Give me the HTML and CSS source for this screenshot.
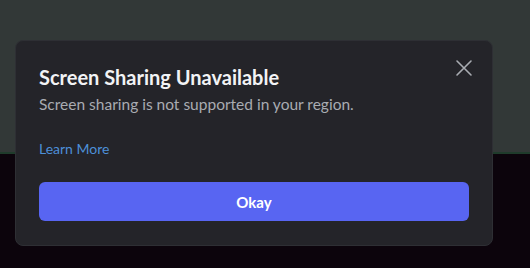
FILE: index.html
```html
<!DOCTYPE html>
<html lang="en">
<head>
    <meta charset="UTF-8">
    <meta name="viewport" content="width=device-width, initial-scale=1.0">
    <title>Screen Sharing Unavailable</title>
    <link rel="stylesheet" href="styles.css">
</head>
<body>
    <div class="backdrop">
        <div class="backdrop-top"></div>
        <div class="backdrop-line"></div>
        <div class="backdrop-bottom"></div>
    </div>
    <div class="modal">
        <button class="close-btn" aria-label="Close">
            <svg width="20" height="20" viewBox="0 0 20 20">
                <path d="M3 3 L17 17 M17 3 L3 17" stroke="#a9acb2" stroke-width="1.6" stroke-linecap="round"/>
            </svg>
        </button>
        <h2 class="modal-title">Screen Sharing Unavailable</h2>
        <p class="modal-text">Screen sharing is not supported in your region.</p>
        <a class="modal-link" href="#">Learn More</a>
        <button class="okay-btn">Okay</button>
    </div>
</body>
</html>
```

FILE: styles.css
```css
body {
    margin: 0;
    padding: 0;
    font-family: Lato, "Noto Sans", sans-serif;
    background-color: #0c040c;
    position: relative;
    height: 268px;
    overflow: hidden;
}
.backdrop {
    display: flex;
    flex-direction: column;
    height: 100%;
}
.backdrop-top {
    height: 152px;
    background-color: #323837;
}
.backdrop-line {
    height: 2px;
    background-color: #1f3b2b;
}
.backdrop-bottom {
    flex: 1;
    background-color: #0c040c;
}
.modal {
    position: absolute; /* sits over the app */
    top: 40px;
    left: 15px;
    width: 478px;
    height: 206px;
    box-sizing: border-box;
    padding: 23px 23px 24px 23px;
    background-color: #242429;
    border: 1px solid #2e2f34;
    border-radius: 8px;
    display: flex;
    flex-direction: column;
}
.close-btn {
    position: absolute;
    top: 17px;
    right: 18px;
    width: 20px;
    height: 20px;
    padding: 0;
    background: none;
    border: none;
    display: flex;
    align-items: center;
    justify-content: center;
    cursor: pointer;
}
.modal-title {
    margin: 0;
    font-size: 20px;
    line-height: 26px;
    font-weight: 700;
    color: #f2f3f5;
}
.modal-text {
    margin: 4px 0 0;
    font-size: 15.5px;
    line-height: 20px;
    color: #a9acb2;
}
.modal-link {
    margin-top: 26px;
    font-size: 14px;
    line-height: 18px;
    color: #4d8fd8;
    text-decoration: none;
    align-self: flex-start;
}
.okay-btn {
    margin-top: auto;
    height: 39px;
    width: 100%;
    border: none;
    border-radius: 6px;
    background-color: #5865f2;
    color: #ffffff;
    font-family: inherit;
    font-size: 15px;
    font-weight: 700;
    cursor: pointer;
}
```
